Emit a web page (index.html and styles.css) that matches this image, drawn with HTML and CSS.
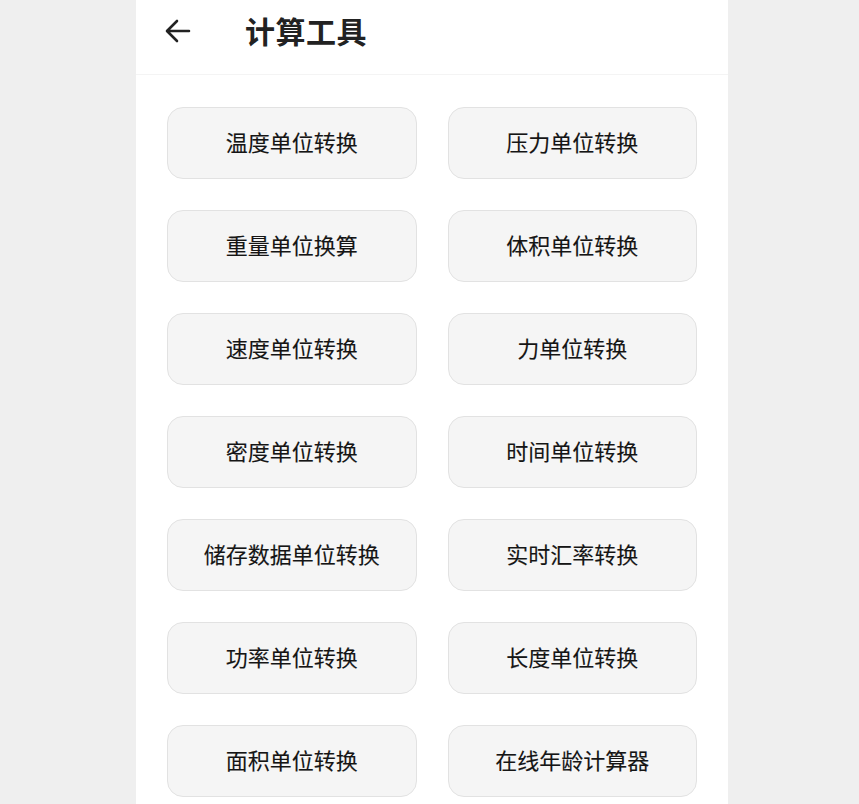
FILE: index.html
```html
<!DOCTYPE html>
<html lang="zh">
<head>
<meta charset="utf-8">
<link rel="stylesheet" href="styles.css">
</head>
<body>
<div class="panel">
  <header class="header">
    <svg class="back" width="26" height="24" viewBox="0 0 26 24">
      <path d="M24 12H3 M12 2 L2 12 L12 22" fill="none" stroke="#222" stroke-width="2.6" stroke-linecap="round" stroke-linejoin="round"/>
    </svg>
    <h1 class="title">计算工具</h1>
  </header>
  <main class="grid">
    <div class="btn">温度单位转换</div>
    <div class="btn">压力单位转换</div>
    <div class="btn">重量单位换算</div>
    <div class="btn">体积单位转换</div>
    <div class="btn">速度单位转换</div>
    <div class="btn">力单位转换</div>
    <div class="btn">密度单位转换</div>
    <div class="btn">时间单位转换</div>
    <div class="btn">储存数据单位转换</div>
    <div class="btn">实时汇率转换</div>
    <div class="btn">功率单位转换</div>
    <div class="btn">长度单位转换</div>
    <div class="btn">面积单位转换</div>
    <div class="btn">在线年龄计算器</div>
  </main>
</div>
</body>
</html>
```

FILE: styles.css
```css
html, body {
  margin: 0;
  padding: 0;
  background: #efefef;
  height: 100%;
  overflow: hidden;
}
body {
  font-family: "Noto Sans CJK SC", "Noto Sans", sans-serif;
  color: #222;
}
.panel {
  width: 592px;
  margin-left: 136px;
  background: #ffffff;
  min-height: 804px;
}
.header {
  height: 74px;
  display: flex;
  align-items: center;
  padding-left: 29px;
  border-bottom: 1px solid #f4f4f4;
  box-sizing: content-box;
}
.back {
  display: block;
  margin-top: -12px;
}
.title {
  margin: -14px 0 0 54px;
  font-size: 30px;
  font-weight: 700;
  letter-spacing: 0.5px;
  color: #222;
}
.grid {
  display: grid;
  grid-template-columns: 1fr 1fr;
  column-gap: 31px;
  row-gap: 31px;
  padding: 32px 31px 0;
}
.btn {
  border: 1px solid #e2e2e2;
  border-radius: 16px;
  background: #f5f5f5;
  display: flex;
  align-items: center;
  justify-content: center;
  padding-bottom: 4px;
  box-sizing: content-box;
  height: 66px;
  font-size: 22px;
  font-weight: 400;
  color: #151515;
  -webkit-text-stroke: 0.12px #151515;
}
```
